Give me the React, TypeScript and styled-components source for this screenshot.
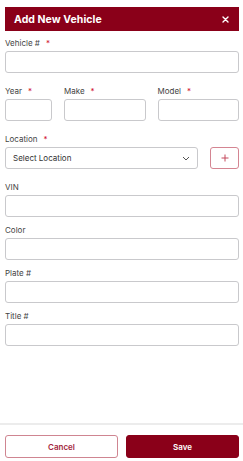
import React from "react";
import styled, { createGlobalStyle } from "styled-components";

const Global = createGlobalStyle`
  html, body { margin: 0; padding: 0; background: #fff; }
  body { font-family: Inter, "Liberation Sans", Arial, sans-serif; }
  * { box-sizing: border-box; }
`;

const Page = styled.div`
  width: 243px;
  height: 461px;
  display: flex;
  flex-direction: column;
  background: #fff;
`;

const Body = styled.div`
  flex: 1;
  padding: 7px 4px 0 5px;
  display: flex;
  flex-direction: column;
`;

const Header = styled.div`
  height: 24px;
  background: #8a0019;
  display: flex;
  align-items: center;
  justify-content: space-between;
  padding: 0 10px 0 9px;
  color: #fff;
  margin-bottom: 7px;
`;

const Title = styled.div`
  font-size: 10.5px;
  font-weight: 700;
  letter-spacing: 0.05px;
`;

const Close = styled.button`
  background: none;
  border: 0;
  padding: 0;
  display: flex;
  color: #fff;
`;

const Field = styled.div<{ $extra?: boolean }>`
  display: flex;
  flex-direction: column;
  gap: 3px;
  margin-bottom: ${(p) => (p.$extra ? 13 : 8)}px;
  min-width: 0;
`;

const RowField = styled(Field)<{ $w?: number }>`
  flex: ${(p) => (p.$w ? `0 0 ${p.$w}px` : "1 1 0")};
`;

const Label = styled.label`
  font-size: 8px;
  line-height: 10px;
  color: #444;
  display: flex;
  gap: 6px;
`;

const Star = styled.span`
  color: #d0102b;
`;

const Input = styled.input`
  height: 22px;
  width: 100%;
  border: 1px solid #c9c9cc;
  border-radius: 3px;
  background: #fff;
  outline: none;
`;

const Row = styled.div`
  display: flex;
  gap: 12px;
`;

const LocRow = styled.div`
  display: flex;
  gap: 12px;
  align-items: flex-end;
`;

const Select = styled.div`
  height: 22px;
  flex: 1;
  border: 1px solid #c9c9cc;
  border-radius: 3px;
  display: flex;
  align-items: center;
  justify-content: space-between;
  padding: 0 7px 0 7px;
  font-size: 8px;
  color: #333;
`;

const PlusButton = styled.button`
  width: 29px;
  height: 22px;
  flex: 0 0 29px;
  border: 1px solid #d48592;
  border-radius: 3px;
  background: #fff;
  color: #c4495d;
  display: flex;
  align-items: center;
  justify-content: center;
  padding: 0;
`;

const Footer = styled.div`
  border-top: 2px solid #ececec;
  padding: 10px 4px 3px 5px;
  display: flex;
  gap: 8px;
`;

const Btn = styled.button<{ $primary?: boolean }>`
  flex: 1;
  height: 23px;
  border-radius: 3px;
  font-family: inherit;
  font-size: 8px;
  font-weight: 600;
  border: 1px solid ${(p) => (p.$primary ? "#8a0019" : "#cf8591")};
  background: ${(p) => (p.$primary ? "#8a0019" : "#fff")};
  color: ${(p) => (p.$primary ? "#fff" : "#a3273d")};
`;

function Req() {
  return <Star>*</Star>;
}

export default function App() {
  return (
    <>
      <Global />
      <Page>
        <Body>
          <Header>
            <Title>Add New Vehicle</Title>
            <Close aria-label="close">
              <svg width="7" height="7" viewBox="0 0 7 7">
                <path d="M1 1 L6 6 M6 1 L1 6" stroke="#fff" strokeWidth="1.4" strokeLinecap="round" />
              </svg>
            </Close>
          </Header>
          <Field $extra>
            <Label>Vehicle # <Req /></Label>
            <Input />
          </Field>
          <Row>
            <RowField $extra $w={47}>
              <Label>Year <Req /></Label>
              <Input />
            </RowField>
            <RowField $extra>
              <Label>Make <Req /></Label>
              <Input />
            </RowField>
            <RowField $extra>
              <Label>Model <Req /></Label>
              <Input />
            </RowField>
          </Row>
          <Field $extra>
            <Label>Location <Req /></Label>
            <LocRow>
              <Select>
                <span>Select Location</span>
                <svg width="8" height="5" viewBox="0 0 8 5">
                  <path d="M1 1 L4 4 L7 1" fill="none" stroke="#555" strokeWidth="1" />
                </svg>
              </Select>
              <PlusButton aria-label="add location">
                <svg width="8" height="8" viewBox="0 0 8 8">
                  <path d="M4 0.5 V7.5 M0.5 4 H7.5" stroke="#c4495d" strokeWidth="1" />
                </svg>
              </PlusButton>
            </LocRow>
          </Field>
          <Field>
            <Label>VIN</Label>
            <Input />
          </Field>
          <Field>
            <Label>Color</Label>
            <Input />
          </Field>
          <Field>
            <Label>Plate #</Label>
            <Input />
          </Field>
          <Field>
            <Label>Title #</Label>
            <Input />
          </Field>
        </Body>
        <Footer>
          <Btn>Cancel</Btn>
          <Btn $primary>Save</Btn>
        </Footer>
      </Page>
    </>
  );
}
